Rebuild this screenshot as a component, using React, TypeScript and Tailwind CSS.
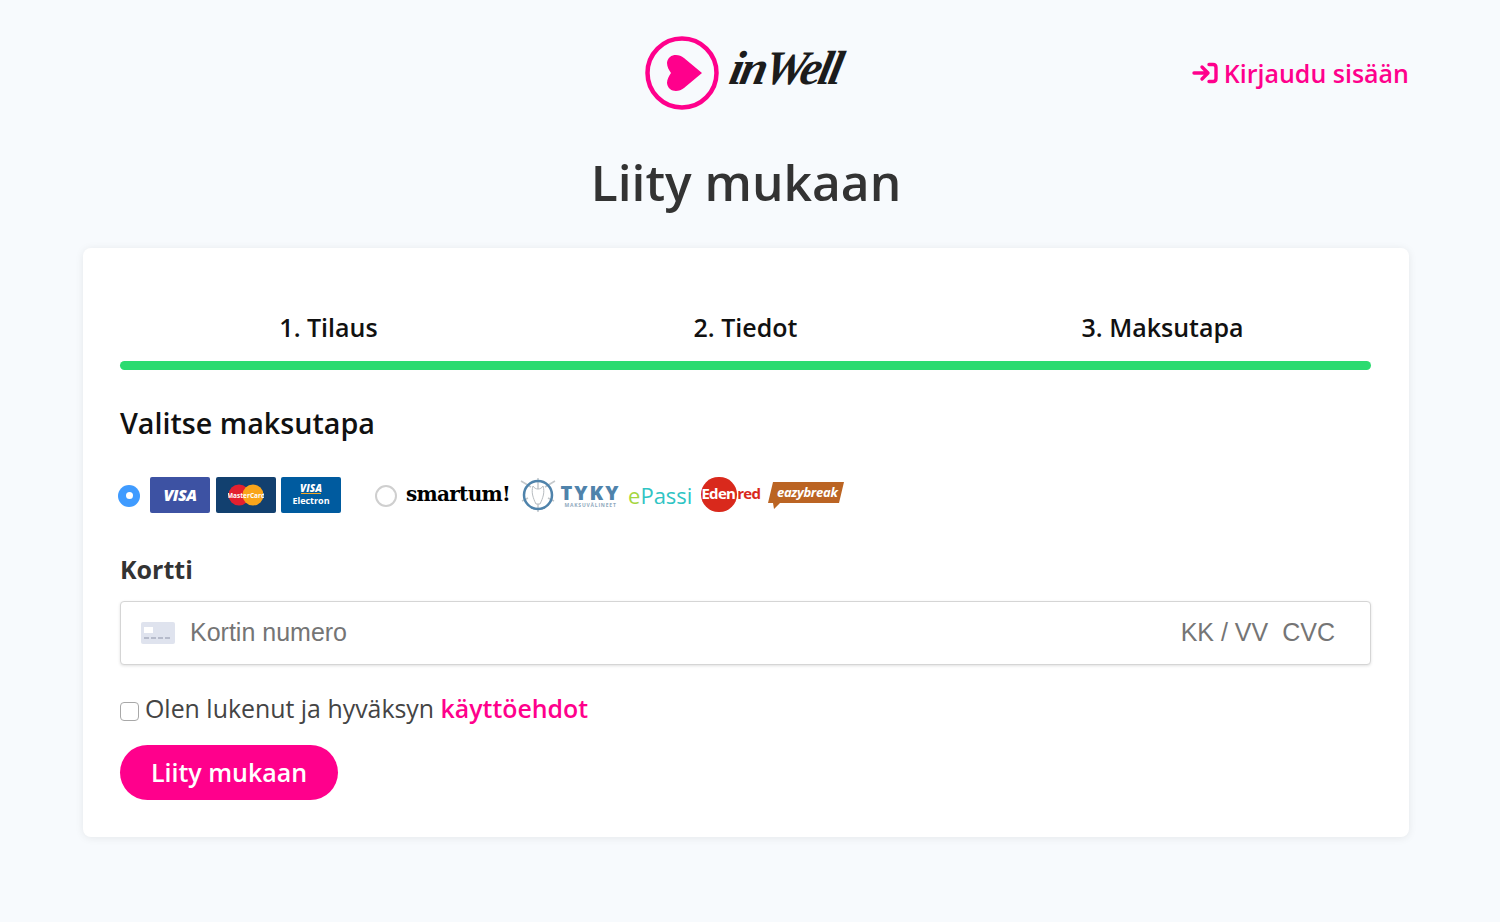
import React from "react";

const Logo = () => (
  <svg width="74" height="74" viewBox="0 0 74 74" className="shrink-0">
    <circle cx="37" cy="37" r="34.500" fill="none" stroke="#ff008c" strokeWidth="4.500" />
    <path d="M57 37 L39 22 C33 17 23 18 22 27 C22 31 24 34 26 37 C24 40 22 43 22 47 C23 56 33 57 39 52 Z" fill="#ff008c" />
  </svg>
);

const Visa = () => (
  <div className="w-[60px] h-[36px] rounded-[2px] bg-[#3d52a3] flex items-center justify-center">
    <span className="font-['Open_Sans'] italic font-extrabold text-white text-[16px] tracking-[-0.5px]">VISA</span>
  </div>
);

const Master = () => (
  <div className="w-[60px] h-[36px] rounded-[2px] bg-[#12406f] flex items-center justify-center">
    <svg width="36" height="22" viewBox="0 0 36 22">
      <circle cx="11" cy="11" r="10.500" fill="#e3202f" />
      <circle cx="25" cy="11" r="10.500" fill="#f9a51b" />
      <text x="18" y="13.500" textAnchor="middle" fontSize="6.500" fontWeight="700" fill="#fff" fontFamily="Open Sans">MasterCard</text>
    </svg>
  </div>
);

const Electron = () => (
  <div className="w-[60px] h-[36px] rounded-[2px] bg-[#005b9f] flex flex-col items-center justify-center">
    <span className="font-['Open_Sans'] italic font-extrabold text-white text-[10px] leading-[10px]">VISA</span>
    <div className="w-[20px] h-[1px] bg-[#f5a623]" />
    <span className="font-['Open_Sans'] font-bold text-white text-[9px] leading-[14px]">Electron</span>
  </div>
);

const Tyky = () => (
  <div className="flex items-center gap-[5px] ml-[10px]">
    <svg width="36" height="34" viewBox="0 0 36 34">
      <path d="M1 3 L11 9 M35 3 L25 9 M18 0 V34 M2 23 L8 20 M34 23 L28 20" stroke="#c4c8cb" strokeWidth="1.500" />
      <circle cx="18" cy="17" r="14" fill="none" stroke="#4f83ab" strokeWidth="2.500" />
      <path d="M13 8 C11 14 13 20 16 26 H20 C23 20 25 14 23 8 C21 12 15 12 13 8 Z" fill="#fff" stroke="#b7bcc0" strokeWidth="1" />
    </svg>
    <div className="flex flex-col items-center w-[59px]">
      <span className="font-['Open_Sans'] font-extrabold text-[#4f83ab] text-[20px] leading-[19px] tracking-[2px]">TYKY</span>
      <span className="font-['Open_Sans'] font-bold text-[#8fa9bd] text-[5px] leading-[6px] tracking-[0.800px]">MAKSUVÄLINEET</span>
    </div>
  </div>
);

const Edenred = () => (
  <div className="relative w-[62px] h-[36px] ml-[9px]">
    <div className="absolute left-0 top-0 w-[36px] h-[35px] rounded-full bg-[#d9291c]" />
    <span className="absolute left-0 top-[6px] font-['Open_Sans'] font-bold text-[15px] leading-[20px] tracking-[-0.7px] text-white whitespace-nowrap">
      Eden<span className="ml-[2px] text-[#d9291c]">red</span>
    </span>
  </div>
);

const Eazy = () => (
  <svg width="76" height="32" viewBox="0 0 76 32" className="ml-[5px]">
    <path d="M5 3 H76 L71 24 H12 L6 30 L5 24 H0 Z" fill="#bb6423" />
    <text x="9" y="18" fontSize="13" fontWeight="700" fontStyle="italic" fill="#fff" fontFamily="Open Sans" letterSpacing="-0.3">eazybreak</text>
  </svg>
);

export default function App() {
  return (
    <div className="min-h-[922px] bg-[#f7fafd] font-['Open_Sans',sans-serif] pl-[83px] pr-[91px] pt-[36px]">
      <header className="relative flex justify-center items-center h-[74px]">
        <div className="flex items-center gap-[12px] -ml-[5px]">
          <Logo />
          <span className="font-['Liberation_Serif',serif] italic font-bold text-[#1c1c1c] text-[48px] leading-[60px] tracking-[-3px] -skew-x-12 -mt-[10px] pr-[2px]">inWell</span>
        </div>
        <a className="absolute right-0 top-[18px] flex items-center gap-[6px] text-[#ff008c] text-[25px] leading-[38px] font-semibold">
          <svg width="26" height="22" viewBox="0 0 26 22" fill="none" stroke="#ff008c" strokeWidth="3.400" strokeLinecap="round" strokeLinejoin="round">
            <path d="M2 11 H15 M10 5 L16 11 L10 17" />
            <path d="M17 2.500 H21 C23 2.500 24 3.500 24 5.500 V16.500 C24 18.500 23 19.500 21 19.500 H17" />
          </svg>
          Kirjaudu sisään
        </a>
      </header>

      <h1 className="text-center text-[#333333] text-[49.700px] leading-[64px] font-semibold mt-[40px]">Liity mukaan</h1>

      <main className="mt-[34px] bg-white rounded-[8px] shadow-[0_1px_8px_rgba(0,0,0,0.08)] h-[589px] pl-[37px] pr-[38px] pt-[61px]">
        <div className="grid grid-cols-3 text-center text-[#111111] text-[25px] leading-[36px] font-semibold">
          <div>1. Tilaus</div>
          <div>2. Tiedot</div>
          <div>3. Maksutapa</div>
        </div>
        <div className="mt-[16px] h-[9px] rounded-full bg-[#2bdb70]" />

        <h2 className="mt-[33px] text-[28.700px] leading-[40px] font-semibold text-[#111111]">Valitse maksutapa</h2>

        <div className="mt-[34px] flex items-center h-[36px]">
          <div className="-ml-[1px] mt-[1px] -translate-x-[1px] w-[22px] h-[22px] rounded-full bg-[#3f9bff] flex items-center justify-center">
            <div className="w-[7px] h-[7px] rounded-full bg-white" />
          </div>
          <div className="ml-[9px] flex gap-[5.500px]">
            <Visa />
            <Master />
            <Electron />
          </div>
          <div className="ml-[34px] w-[22px] h-[22px] rounded-full bg-white border-2 border-[#cfcfcf] mt-[2px]" />
          <span className="ml-[9px] -mt-[2px] font-['DejaVu_Serif',serif] font-bold text-black text-[20px] leading-[30px] tracking-[-0.700px]">smartum!</span>
          <Tyky />
          <span className="ml-[8px] font-['Open_Sans'] text-[22px] leading-[36px] text-[#2fc4c4]"><span className="text-[#a5d63f]">e</span>Passi</span>
          <Edenred />
          <Eazy />
        </div>

        <label className="block mt-[38px] text-[25px] leading-[36px] font-bold text-[#333333]">Kortti</label>

        <div className="mt-[14px] h-[64px] border border-[#d5d5d5] rounded-[4px] bg-white shadow-[0_1px_3px_rgba(0,0,0,0.12)] flex items-center pl-[20px] pr-[35px] font-['Liberation_Sans',sans-serif] text-[25px] text-[#757575]">
          <svg width="34" height="22" viewBox="0 0 34 22" className="shrink-0">
            <rect width="34" height="22" rx="2" fill="#dfe3ee" />
            <rect x="3" y="5" width="9" height="6" fill="#fff" />
            <path d="M3 16 H31" stroke="#a9afc0" strokeWidth="1.500" strokeDasharray="5 2" />
          </svg>
          <span className="ml-[15px]">Kortin numero</span>
          <span className="ml-auto">KK / VV</span>
          <span className="ml-[14px]">CVC</span>
        </div>

        <div className="mt-[23px] flex items-center h-[40px]">
          <div className="w-[19px] h-[19px] rounded-[4px] border border-[#a8a8a8] bg-white mt-[6px]" />
          <span className="ml-[6px] text-[24.900px] leading-[40px] text-[#444444]">Olen lukenut ja hyväksyn <a className="font-semibold text-[#ff008c]">käyttöehdot</a></span>
        </div>

        <button className="mt-[17px] w-[218px] h-[55px] rounded-full bg-[#ff008c] text-white text-[25px] font-semibold">Liity mukaan</button>
      </main>
    </div>
  );
}
